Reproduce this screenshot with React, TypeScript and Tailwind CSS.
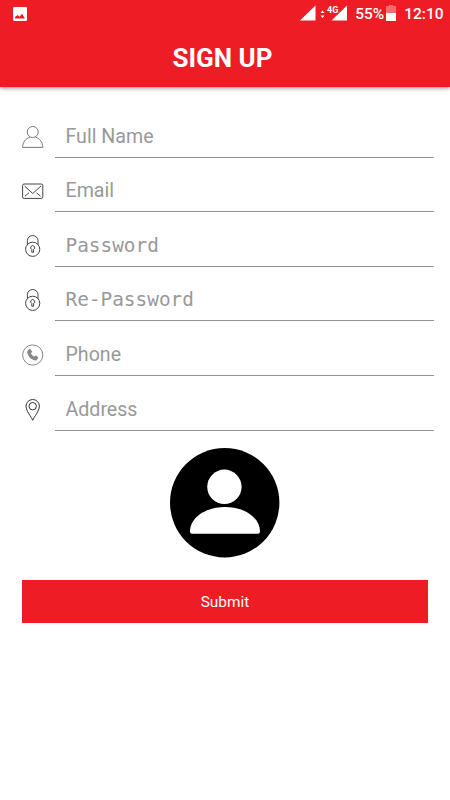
import React from 'react';

const fields = [
  { name: 'name', label: 'Full Name', type: 'text', icon: <UserIcon /> },
  { name: 'email', label: 'Email', type: 'email', icon: <MailIcon /> },
  { name: 'password', label: 'Password', type: 'password', icon: <LockIcon /> },
  { name: 'repassword', label: 'Re-Password', type: 'password', icon: <LockIcon /> },
  { name: 'phone', label: 'Phone', type: 'tel', icon: <PhoneIcon /> },
  { name: 'address', label: 'Address', type: 'text', icon: <PinIcon /> },
];

function App() {
  return (
    <div className="h-[800px] w-[450px] overflow-hidden bg-white font-[Roboto,sans-serif]">
      {/* Header */}
      <header className="h-[87px] bg-[#ee1c24] text-white shadow-[0_1px_4px_rgba(0,0,0,0.5)]">
        <StatusBar />
        <h1 className="pr-[5px] pt-[14px] text-center text-[26px] font-bold leading-[34px]">SIGN UP</h1>
      </header>

      {/* Form */}
      <form className="flex flex-col pt-[16px]" onSubmit={(e) => e.preventDefault()}>
        {fields.map((field) => (
          <Field key={field.name} {...field} />
        ))}

        <button type="button" className="ml-[170px] mt-[17px] h-[110px] w-[110px]" aria-label="Photo">
          <svg viewBox="0 0 110 110" className="h-full w-full">
            <circle cx="54.7" cy="54.7" r="54.7" fill="#000" />
            <circle cx="54.4" cy="38.8" r="17.2" fill="#fff" />
            <path d="M22 85.8Q20 85.8 20 83.5C20 70 35 59 55 59S90 70 90 83.5Q90 85.8 88 85.8Z" fill="#fff" />
          </svg>
        </button>

        <button
          type="submit"
          className="ml-[22px] mt-[22px] h-[43px] w-[406px] bg-[#ee1c24] pt-[3px] text-[15.4px] text-white"
        >
          Submit
        </button>
      </form>
    </div>
  );
}

function StatusBar() {
  return (
    <div className="flex h-[27px] items-center justify-between pl-[13px] pr-[6.5px]">
      <svg viewBox="0 0 14 14" className="h-[14px] w-[14px]">
        <rect width="14" height="14" rx="1.2" fill="#fff" />
        <path d="M2 11.5V10L4.5 8L6.5 9.8L9 6.8L12 11.5Z" fill="#ee1c24" />
      </svg>
      <div className="flex items-center">
        <svg viewBox="0 0 48 20" className="mr-[7.5px] h-[20px] w-[48px]" fill="#fff">
          <path d="M0 16.5L15.5 1.5V16.5Z" />
          <path d="M20.5 9L22.5 6.5L24.5 9ZM20.5 11.5L22.5 14L24.5 11.5Z" />
          <path d="M31.5 16.5L47 1.5V16.5Z" />
          <text
            x="27"
            y="8.7"
            fontSize="9"
            fontWeight="700"
            stroke="#ee1c24"
            strokeWidth="1.4"
            paintOrder="stroke"
          >
            4G
          </text>
        </svg>
        <span className="text-[15.5px] font-medium leading-[20px]">55%</span>
        <svg viewBox="0 0 10 16" className="-mt-px ml-[2px] h-[16px] w-[10px]" fill="#fff">
          <path d="M0 1H3V0H7V1H10V8H0Z" opacity="0.35" />
          <path d="M0 8H10V16H0Z" />
        </svg>
        <span className="ml-[8px] text-[15.5px] font-medium leading-[20px]">12:10</span>
      </div>
    </div>
  );
}

function Field({ name, label, type, icon }: { name: string; label: string; type: string; icon: React.ReactNode }) {
  const font =
    type === 'password' ? "font-['DejaVu_Sans_Mono',monospace] text-[19.4px] pt-[1px]" : 'text-[19.6px] pt-[1px]';

  return (
    <label className="flex h-[54.6px] items-end pl-[22px] pr-[16px]">
      <span className="mb-[10px] mr-[11px] h-[22px] w-[22px] shrink-0">{icon}</span>
      <input
        name={name}
        type={type}
        placeholder={label}
        className={`h-[43px] min-w-0 flex-1 border-b border-[#929292] pl-[10.5px] text-gray-800 outline-none placeholder:text-[#999] ${font}`}
      />
    </label>
  );
}

function UserIcon() {
  return (
    <svg viewBox="0 0 22 22" className="h-full w-full" fill="none" stroke="#777" strokeWidth="1">
      <circle cx="10.7" cy="6" r="5.5" />
      <path d="M7.8 11.2C3.5 12.7 .7 16.2 .6 21.4H20.8C20.7 16.2 17.9 12.7 13.6 11.2" />
    </svg>
  );
}

function MailIcon() {
  return (
    <svg viewBox="0 0 22 22" className="h-full w-full" fill="none" stroke="#444" strokeWidth="1">
      <rect x=".6" y="4" width="20.2" height="14.4" rx="1.5" />
      <path d="M2.5 6L10.7 13.5L19 6M3 16.2L7 12.7M18.5 16.2L14.5 12.7" />
    </svg>
  );
}

function LockIcon() {
  return (
    <svg viewBox="0 0 22 22" className="h-full w-full" fill="none" stroke="#444" strokeWidth="1">
      <path d="M5.4 9.7V5.6A5.3 5.1 0 0 1 16 5.6V9.7" />
      <circle cx="10.7" cy="14.3" r="7.1" />
      <path d="M9.8 14.4A2 2 0 1 1 11.6 14.4V17.2H9.8Z" />
    </svg>
  );
}

function PhoneIcon() {
  return (
    <svg viewBox="0 0 22 22" className="h-full w-full">
      <circle cx="10.7" cy="11" r="10.1" fill="none" stroke="#888" />
      <path
        d="M6.1 6L7.5 5.1Q8.3 4.8 8.8 5.5L10 7.5Q10.2 8.2 9.6 8.6L8.9 9.3Q9.9 11.6 12 12.8L12.9 11.9Q13.5 11.4 14.1 11.8L15.9 13.1Q16.4 13.6 16 14.3L15 15.8Q13.9 16.8 12.1 16.2C8.3 15 5.9 12 5.2 8.6Q5 7 6.1 6Z"
        fill="#888"
      />
    </svg>
  );
}

function PinIcon() {
  return (
    <svg viewBox="0 0 22 22" className="h-full w-full" fill="none" stroke="#333" strokeWidth="1">
      <path d="M10.7 21.3C9.5 18 4 12 4 7.2A6.7 6.7 0 0 1 17.4 7.2C17.4 12 11.9 18 10.7 21.3Z" />
      <circle cx="10.7" cy="7.2" r="3.7" />
    </svg>
  );
}

export default App;
